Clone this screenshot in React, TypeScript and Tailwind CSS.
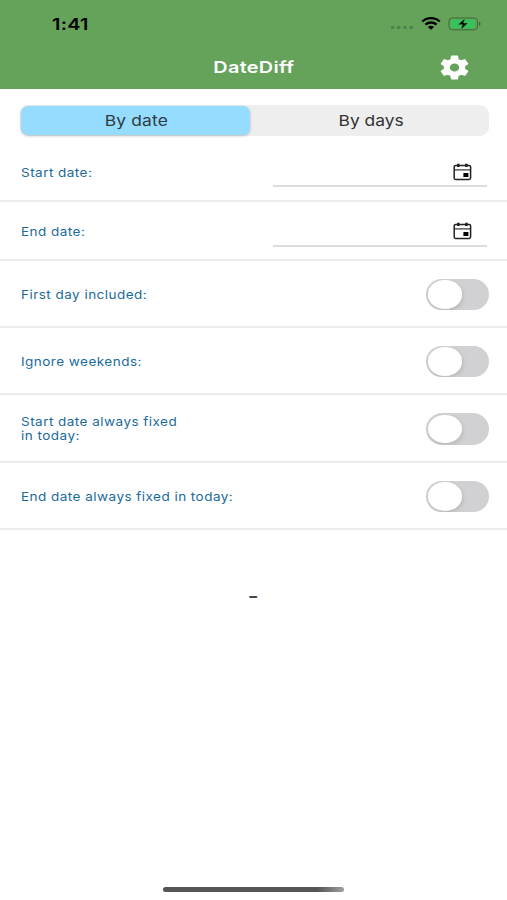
import type { ReactNode } from "react";

function StatusBar() {
  return (
    <div className="flex h-[46px] items-center pl-[52px] pr-[25px] text-black">
      <span className="origin-left scale-x-[1.24] pt-px text-[16px] font-semibold leading-none tracking-[0.2px]">1:41</span>
      <div className="ml-auto flex items-center">
        <svg width="24" height="5" viewBox="0 0 24 5" className="mt-[9px]" fill="#4c8449">
          <rect x="0.8" y="1" width="3.6" height="3" rx="1.2" />
          <rect x="7" y="1" width="3.6" height="3" rx="1.2" />
          <rect x="13.2" y="1" width="3.6" height="3" rx="1.2" />
          <rect x="19.4" y="1" width="3.6" height="3" rx="1.2" />
        </svg>
        <svg width="20" height="13" viewBox="0 0 20 13" className="ml-[7px] mt-px" fill="none" stroke="#000" strokeWidth="2.3">
          <path d="M1.2 4.5C6 -0.1 14 -0.1 18.8 4.5" />
          <path d="M4.4 7.6C7.5 4.8 12.5 4.8 15.6 7.6" />
          <path d="M6.9 9.9C8.6 8.4 11.4 8.4 13.1 9.9L10 12.7Z" fill="#000" stroke="none" />
        </svg>
        <svg width="34" height="14" viewBox="0 0 34 14" className="ml-[7px] mt-px">
          <rect x="1" y="1" width="28.5" height="11.8" rx="3.5" fill="none" stroke="#3a673b" strokeWidth="1" />
          <rect x="2.6" y="2.5" width="24.2" height="8.8" rx="2" fill="#35c35c" />
          <path d="M31 4.8C33 5.5 33 8.3 31 9Z" fill="#3a673b" />
          <path d="M17 1.2L9.8 7.8H14.3L12.8 12.8L20 6H15.6Z" fill="#000" stroke="#4fae58" strokeWidth="0.6" />
        </svg>
      </div>
    </div>
  );
}

function Gear() {
  return (
    <svg width="29" height="25" viewBox="2.2 2 19.6 20" preserveAspectRatio="none" fill="#fff">
      <path d="M19.14 12.94c.04-.3.06-.61.06-.94 0-.32-.02-.64-.07-.94l2.03-1.58a.49.49 0 0 0 .12-.61l-1.92-3.32a.488.488 0 0 0-.59-.22l-2.39.96c-.5-.38-1.03-.7-1.62-.94l-.36-2.54a.484.484 0 0 0-.48-.41h-3.84c-.24 0-.43.17-.47.41l-.36 2.54c-.59.24-1.13.57-1.62.94l-2.39-.96c-.22-.08-.47 0-.59.22L2.74 8.87c-.12.21-.08.47.12.61l2.03 1.58c-.05.3-.09.63-.09.94s.02.64.07.94l-2.03 1.58a.49.49 0 0 0-.12.61l1.92 3.32c.12.22.37.29.59.22l2.39-.96c.5.38 1.03.7 1.62.94l.36 2.54c.05.24.24.41.48.41h3.84c.24 0 .44-.17.47-.41l.36-2.54c.59-.24 1.13-.56 1.62-.94l2.39.96c.22.08.47 0 .59-.22l1.92-3.32c.12-.22.07-.47-.12-.61l-2.01-1.58zM12 15.2A3.2 3.2 0 1 1 12 8.8a3.2 3.2 0 0 1 0 6.4z" />
    </svg>
  );
}

function CalendarIcon() {
  return (
    <svg width="19" height="18" viewBox="0 0 19 18" fill="none" stroke="#222">
      <rect x="1.2" y="2.4" width="16.4" height="14" rx="1.4" strokeWidth="1.5" />
      <path d="M1.2 6.9H17.6" strokeWidth="1.1" />
      <path d="M5.3 0.8V4M13.4 0.8V4" strokeWidth="2.6" />
      <rect x="10.4" y="10" width="5" height="4" fill="#000" stroke="none" />
    </svg>
  );
}

function Row({ label, className, children }: { label: ReactNode; className: string; children: ReactNode }) {
  return (
    <div className={`flex items-center justify-between border-b-2 border-[#ebebeb] pl-[20.5px] pt-[2px] ${className}`}>
      <span className="origin-left scale-x-[1.125] whitespace-nowrap pt-px text-[12px] leading-[14px] tracking-[0.42px] text-[#1a6b9c]">{label}</span>
      {children}
    </div>
  );
}

function DateField() {
  return (
    <div className="mr-[20px] mt-px flex h-[29px] w-[214px] items-center justify-end border-b-2 border-[#dcdcdc] pr-[15px]">
      <CalendarIcon />
    </div>
  );
}

function Toggle() {
  return (
    <div className="mr-[18px] flex h-[31.5px] w-[63px] items-center overflow-hidden rounded-[16px] bg-[#d1d1d3] pl-[1.5px]">
      <div className="h-[28.5px] w-[34.5px] rounded-[50%] bg-white shadow-[1px_2px_4px_rgba(0,0,0,0.12)]" />
    </div>
  );
}

export default function App() {
  return (
    <div className="flex h-[900px] w-[507px] flex-col bg-white font-['Inter','Liberation_Sans',sans-serif]">
      <header className="h-[89px] shrink-0 bg-[#65a35b]">
        <StatusBar />
        <div className="grid h-[43px] grid-cols-[1fr_auto_1fr] items-center">
          <span className="col-start-2 scale-x-[1.2] text-[16.5px] font-semibold leading-none tracking-[0.3px] text-white">DateDiff</span>
          <div className="mr-[38px] justify-self-end">
            <Gear />
          </div>
        </div>
      </header>

      <div className="ml-[20px] mr-[18px] mt-[15.5px] flex h-[31.5px] shrink-0 items-center rounded-[9px] bg-[#eeeeee] p-px text-[15px] text-[#2f3b42]">
        <div className="flex h-[28.5px] w-[229px] items-center justify-center rounded-[7px] bg-[#95dcff] shadow-[0_1px_3px_rgba(0,0,0,0.22)]">
          <span className="scale-x-[1.16] pl-px pt-px tracking-[0.15px]">By date</span>
        </div>
        <div className="flex flex-1 items-center justify-center pl-[5px]">
          <span className="scale-x-[1.16] pt-px text-[#333333]">By days</span>
        </div>
      </div>

      <main className="mt-[6px] flex flex-col">
        <Row label="Start date:" className="h-[60px]"><DateField /></Row>
        <Row label="End date:" className="h-[59px]"><DateField /></Row>
        <Row label="First day included:" className="h-[67px]"><Toggle /></Row>
        <Row label="Ignore weekends:" className="h-[67px]"><Toggle /></Row>
        <Row label={<>Start date always fixed<br />in today:</>} className="h-[67.5px]"><Toggle /></Row>
        <Row label="End date always fixed in today:" className="h-[67.5px]"><Toggle /></Row>
        <div className="mt-[54px] flex justify-center">
          <span className="scale-x-[1.3] text-[18px] font-semibold leading-[24px] text-[#444444]">-</span>
        </div>
      </main>

      <div className="mb-[8px] ml-[163px] mt-auto h-[5px] w-[181px] rounded-full bg-linear-to-r from-[#555555] from-85% to-[#a0a0a0]" />
    </div>
  );
}
